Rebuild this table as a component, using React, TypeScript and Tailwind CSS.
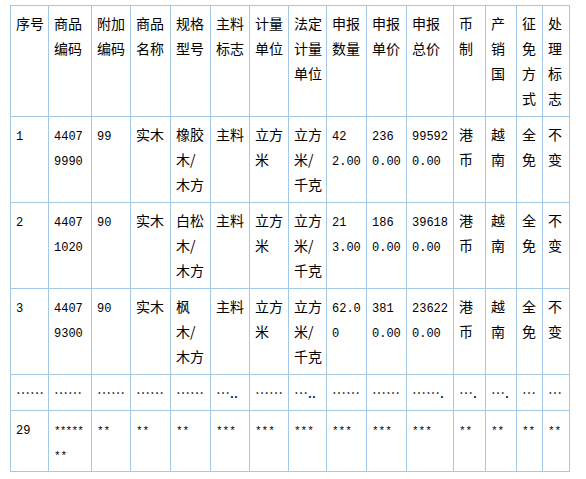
import React from "react";

// column widths, border to border
const cols = [38, 43, 39, 40, 40, 39, 39, 38, 40, 40, 47, 32, 31, 26, 27];

const header = [
  ["序号"],
  ["商品", "编码"],
  ["附加", "编码"],
  ["商品", "名称"],
  ["规格", "型号"],
  ["主料", "标志"],
  ["计量", "单位"],
  ["法定", "计量", "单位"],
  ["申报", "数量"],
  ["申报", "单价"],
  ["申报", "总价"],
  ["币", "制"],
  ["产", "销", "国"],
  ["征", "免", "方", "式"],
  ["处", "理", "标", "志"],
];

const rows: string[][][] = [
  [
    ["1"],
    ["4407", "9990"],
    ["99"],
    ["实木"],
    ["橡胶", "木/", "木方"],
    ["主料"],
    ["立方", "米"],
    ["立方", "米/", "千克"],
    ["42", "2.00"],
    ["236", "0.00"],
    ["99592", "0.00"],
    ["港", "币"],
    ["越", "南"],
    ["全", "免"],
    ["不", "变"],
  ],
  [
    ["2"],
    ["4407", "1020"],
    ["90"],
    ["实木"],
    ["白松", "木/", "木方"],
    ["主料"],
    ["立方", "米"],
    ["立方", "米/", "千克"],
    ["21", "3.00"],
    ["186", "0.00"],
    ["39618", "0.00"],
    ["港", "币"],
    ["越", "南"],
    ["全", "免"],
    ["不", "变"],
  ],
  [
    ["3"],
    ["4407", "9300"],
    ["90"],
    ["实木"],
    ["枫", "木/", "木方"],
    ["主料"],
    ["立方", "米"],
    ["立方", "米/", "千克"],
    ["62.0", "0"],
    ["381", "0.00"],
    ["23622", "0.00"],
    ["港", "币"],
    ["越", "南"],
    ["全", "免"],
    ["不", "变"],
  ],
  [
    ["……"],
    ["……"],
    ["……"],
    ["……"],
    ["……"],
    ["….."],
    ["……"],
    ["….."],
    ["……"],
    ["……"],
    ["……."],
    ["…."],
    ["…."],
    ["…"],
    ["…"],
  ],
  [
    ["29"],
    ["*****", "**"],
    ["**"],
    ["**"],
    ["**"],
    ["***"],
    ["***"],
    ["***"],
    ["***"],
    ["***"],
    ["***"],
    ["**"],
    ["**"],
    ["**"],
    ["**"],
  ],
];

const isAscii = (s: string) => /^[\x20-\x7e]+$/.test(s);

function Line({ text }: { text: string }) {
  if (!isAscii(text)) return <>{text}</>;
  if (text.startsWith("*")) {
    return (
      <span
        className={
          text.length > 4
            ? "font-['Liberation_Mono',monospace] text-[11px] tracking-[-0.8px]"
            : "font-['Liberation_Mono',monospace] text-[11px]"
        }
      >
        {text}
      </span>
    );
  }
  return <span className="font-['Liberation_Mono',monospace] text-[12px]">{text}</span>;
}

function Cell({ lines }: { lines: string[] }) {
  return (
    <td className="border border-[#a4c8e8] px-[5px] py-[5px] align-top whitespace-nowrap overflow-hidden">
      {lines.map((line, i) => (
        <div key={i} className="h-[25px] leading-[25px]">
          <Line text={line} />
        </div>
      ))}
    </td>
  );
}

export default function App() {
  return (
    <div className="min-h-screen bg-white pl-[10px] pt-[5px] font-['Noto_Sans_CJK_SC',sans-serif] text-[14px] text-black">
      <table className="table-fixed border-collapse w-[559px]">
        <colgroup>
          {cols.map((w, i) => (
            <col key={i} style={{ width: w }} />
          ))}
        </colgroup>
        <tbody>
          <tr>
            {header.map((h, i) => (
              <Cell key={i} lines={h} />
            ))}
          </tr>
          {rows.map((r, ri) => (
            <tr key={ri}>
              {r.map((c, ci) => (
                <Cell key={ci} lines={c} />
              ))}
            </tr>
          ))}
        </tbody>
      </table>
    </div>
  );
}
